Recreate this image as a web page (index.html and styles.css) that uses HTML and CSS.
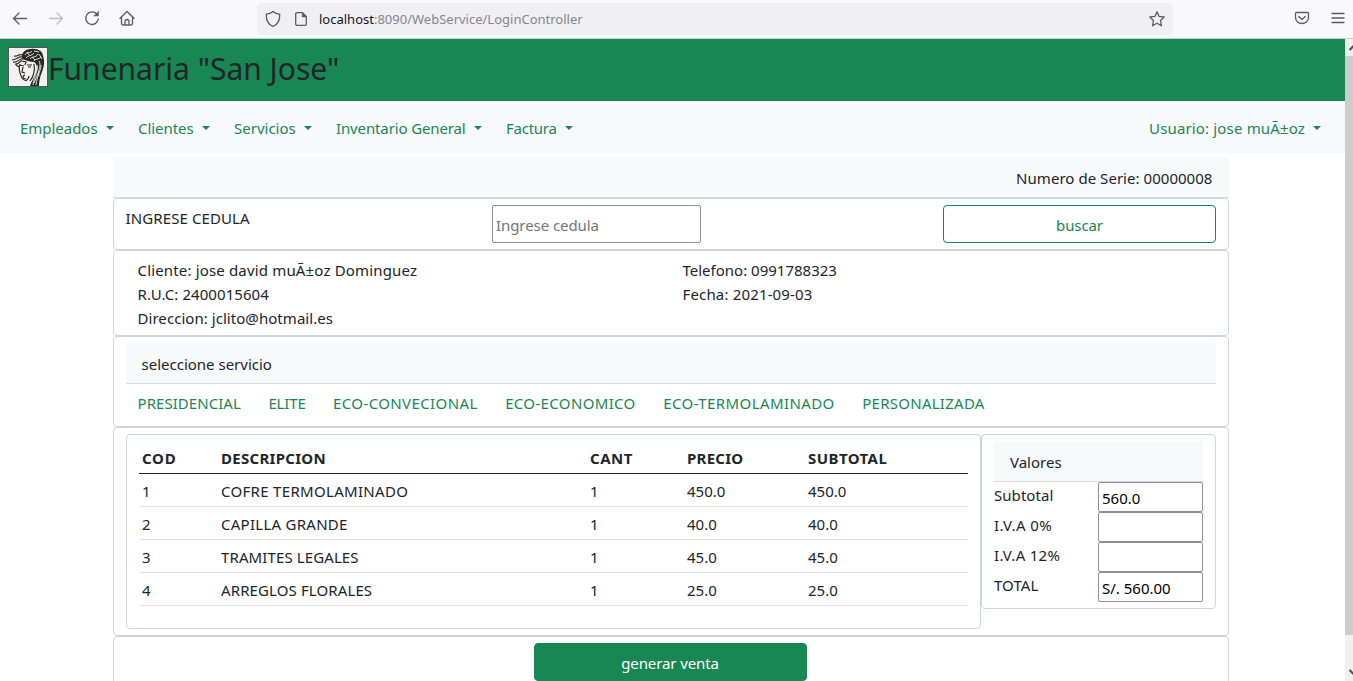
FILE: index.html
```
<!DOCTYPE html>
<html lang="es">
<head>
<meta charset="utf-8">
<title>Funenaria "San Jose"</title>
<link rel="stylesheet" href="styles.css">
</head>
<body>
<div class="toolbar">
  <svg class="tool back" width="16" height="16" viewBox="0 0 16 16"><path d="M14.500 8.500H1.500M7 3L1.500 8.500L7 14"/></svg>
  <svg class="tool forward" width="16" height="16" viewBox="0 0 16 16"><path d="M1.500 8.500H14.500M9 3L14.500 8.500L9 14"/></svg>
  <svg class="tool reload" width="16" height="16" viewBox="0 0 16 16"><path d="M12.800 4A6.300 6.300 0 1 0 14.300 9"/><path class="solid" d="M14.500 1.500V6H10Z"/></svg>
  <svg class="tool home" width="16" height="16" viewBox="0 0 16 16"><path d="M1 8.200L8 1.500L15 8.200M2.500 7V13.500Q2.500 15 4 15H12Q13.500 15 13.500 13.500V7M6 15V11.500Q6 9.500 8 9.500Q10 9.500 10 11.500V15"/></svg>
  <div class="urlbar">
    <svg class="tool" width="16" height="18" viewBox="0 0 16 18"><path d="M8 1.500C6 3.200 4 3.900 1.300 4.200C1 9.500 3.500 14.500 8 16.500C12.500 14.500 15 9.500 14.700 4.200C12 3.900 10 3.200 8 1.500Z"/></svg>
    <svg class="tool page" width="14" height="16" viewBox="0 0 14 16"><path d="M3 1.700H8.500L12.300 5.500V13Q12.300 14.300 11 14.300H3Q1.700 14.300 1.700 13V3Q1.700 1.700 3 1.700Z"/><path class="solid" d="M8.200 1.700V6H12.300Z"/></svg>
    <span class="url"><b>localhost</b>:8090/WebService/LoginController</span>
    <svg class="tool star" width="18" height="18" viewBox="0 0 18 18"><path d="M9 1.800L11.100 6.400L16.200 7L12.500 10.500L13.500 15.800L9 13.200L4.500 15.800L5.500 10.500L1.800 7L6.900 6.400Z"/></svg>
  </div>
  <svg class="tool pocket" width="16" height="16" viewBox="0 0 16 16"><path d="M2.500 2.500H13.500Q14.500 2.500 14.500 3.500V7.500A6.500 6 0 0 1 1.500 7.500V3.500Q1.500 2.500 2.500 2.500ZM4.800 6.500L8 9.500L11.200 6.500"/></svg>
  <svg class="tool menu" width="14" height="14" viewBox="0 0 14 14"><path d="M1 2.500H13M1 7H13M1 11.500H13"/></svg>
</div>

<div class="viewport">
  <div class="page-body">
    <header class="brand">
      <svg class="logo" width="40" height="40" viewBox="0 0 40 40">
        <rect x=".5" y=".5" width="39" height="39" fill="#f1f1f1" stroke="#555"/>
        <path fill="#2b2725" d="M14 8C15 4 19 2 23 2C29 1 35 4 35 9C37 14 36 20 34 25C32 30 31 34 31 39H22C23 35 26 31 28 26C30 21 29 17 26 15C22 15 18 13 14 12Z"/>
        <g fill="none" stroke="#2b2725" stroke-width="1.200">
          <path d="M14 8C11 6 10 10 6 9M14 10C11 9 8 13 4 13M15 12C11 11 10 16 5 15M14 14C12 13 11 18 7 17M12 17C10 22 12 27 14 31M12 20C9 19 8 19 8 17M14 14L18 15L17 18M12 18L16 19M14 31C17 35 20 34 21 29M17 28C14 29 15 32 18 32M26 17C27 23 26 29 22 34M19 18L24 18M20 20H23M15 20L14 25L17 26"/>
        </g>
        <g fill="none" stroke="#f1f1f1" stroke-width=".9">
          <path d="M17 8C19 4 22 7 24 4M18 11C20 8 24 9 26 6M22 12C24 9 28 11 30 7M26 14C28 11 31 13 33 10M31 14C34 19 29 24 31 29M29 18C31 22 26 29 25 38M33 18C33 24 29 28 28 38M26 4L31 5M19 5L21 8M24 10L27 13M31 7L34 12M31 24L26 36"/>
        </g>
      </svg>
      <span class="brand-name">Funenaria "San Jose"</span>
    </header>

    <nav class="menu-bar">
      <a class="menu-item empleados"><span>Empleados</span><i class="caret"></i></a>
      <a class="menu-item clientes"><span>Clientes</span><i class="caret"></i></a>
      <a class="menu-item servicios"><span>Servicios</span><i class="caret"></i></a>
      <a class="menu-item inventario"><span>Inventario General</span><i class="caret"></i></a>
      <a class="menu-item factura"><span>Factura</span><i class="caret"></i></a>
      <a class="menu-item usuario"><span>Usuario: jose muÃ±oz</span><i class="caret"></i></a>
    </nav>

    <main class="invoice">
      <div class="card-header serial">Numero de Serie: 00000008</div>

      <section class="panel search">
        <label class="search-label ls-11">INGRESE CEDULA</label>
        <input class="field search-input" placeholder="Ingrese cedula">
        <button class="btn btn-outline">buscar</button>
      </section>

      <section class="panel client">
        <div class="client-col">
          <div class="ls-16">Cliente: jose david muÃ±oz Dominguez</div>
          <div class="ls-07">R.U.C: 2400015604</div>
          <div class="ls-05">Direccion: jclito@hotmail.es</div>
        </div>
        <div class="client-col">
          <div>Telefono: 0991788323</div>
          <div class="ls-16">Fecha: 2021-09-03</div>
        </div>
      </section>

      <section class="panel">
        <div class="card-header">seleccione servicio</div>
        <div class="services">
          <a class="ls-05">PRESIDENCIAL</a>
          <a class="tight">ELITE</a>
          <a class="ls-38">ECO-CONVECIONAL</a>
          <a class="ls-35">ECO-ECONOMICO</a>
          <a class="ls-41">ECO-TERMOLAMINADO</a>
          <a class="ls-26">PERSONALIZADA</a>
        </div>
      </section>

      <section class="panel detail">
        <div class="panel items">
          <table class="table">
            <colgroup><col class="c-cod"><col class="c-desc"><col class="c-cant"><col class="c-precio"><col></colgroup>
            <thead><tr><th class="ls-77">COD</th><th class="ls-29">DESCRIPCION</th><th class="ls-53">CANT</th><th class="ls-26">PRECIO</th><th class="ls-44">SUBTOTAL</th></tr></thead>
            <tbody>
              <tr><td>1</td><td class="ls-31">COFRE TERMOLAMINADO</td><td>1</td><td>450.0</td><td>450.0</td></tr>
              <tr><td>2</td><td class="ls-26">CAPILLA GRANDE</td><td>1</td><td>40.0</td><td>40.0</td></tr>
              <tr><td>3</td><td class="ls-11">TRAMITES LEGALES</td><td>1</td><td>45.0</td><td>45.0</td></tr>
              <tr><td>4</td><td class="ls-11">ARREGLOS FLORALES</td><td>1</td><td>25.0</td><td>25.0</td></tr>
            </tbody>
          </table>
        </div>
        <div class="panel totals">
          <div class="card-header">Valores</div>
          <div class="total-row"><label class="ls-05">Subtotal</label><input class="field" value="560.0"></div>
          <div class="total-row"><label class="ls-38">I.V.A 0%</label><input class="field"></div>
          <div class="total-row"><label class="ls-29">I.V.A 12%</label><input class="field"></div>
          <div class="total-row"><label class="ls-05">TOTAL</label><input class="field" value="S/. 560.00"></div>
        </div>
      </section>

      <section class="panel submit">
        <button class="btn btn-solid">generar venta</button>
      </section>
    </main>
  </div>

  <div class="scrollbar">
    <svg class="arrow" width="8" height="17" viewBox="0 0 8 17"><path d="M4.500 11L8.500 7L12.500 11"/></svg>
    <div class="thumb"></div>
    <svg class="arrow down" width="8" height="17" viewBox="0 0 8 17"><path d="M4.500 6L8.500 10L12.500 6"/></svg>
  </div>
</div>
</body>
</html>
```
FILE: styles.css
```
* { box-sizing: border-box; }

html, body { height: 100%; }

body {
  margin: 0;
  overflow: hidden;
  display: flex;
  flex-direction: column;
  background: #fff;
  color: #212529;
  font: 15px/24px "Noto Sans", "Open Sans", sans-serif;
}

/* letter spacing steps, in hundredths of a pixel */
.tight { letter-spacing: -.15px; }
.ls-05 { letter-spacing: .05px; }
.ls-07 { letter-spacing: .07px; }
.ls-11 { letter-spacing: .11px; }
.ls-16 { letter-spacing: .16px; }
.ls-26 { letter-spacing: .26px; }
.ls-29 { letter-spacing: .29px; }
.ls-31 { letter-spacing: .31px; }
.ls-35 { letter-spacing: .35px; }
.ls-38 { letter-spacing: .38px; }
.ls-41 { letter-spacing: .41px; }
.ls-44 { letter-spacing: .44px; }
.ls-53 { letter-spacing: .53px; }
.ls-77 { letter-spacing: .77px; }

/* browser toolbar */
.toolbar {
  flex: none;
  display: flex;
  align-items: center;
  height: 39px;
  padding: 0 8px 2px 12px;
  background: #f9f9fb;
  border-bottom: 1px solid #ccc;
}
.tool { flex: none; fill: none; stroke: #5b5b66; stroke-width: 1.3; stroke-linecap: round; stroke-linejoin: round; }
.tool .solid { fill: #5b5b66; stroke-width: .5; }
.forward { margin-left: 20px; stroke: #bcbcc2; }
.reload { margin-left: 20px; }
.home { margin-left: 19px; }
.urlbar {
  display: flex;
  align-items: center;
  width: 916px;
  height: 32px;
  margin-left: 122px;
  margin-top: 1px;
  padding: 0 7px 0 8px;
  border-radius: 4px;
  background: #f0f0f4;
}
.page { margin-left: 13px; }
.url { margin-left: 11px; padding-top: 1px; font-size: 13px; color: #85858e; white-space: nowrap; }
.url b { font-weight: 400; color: #15141a; }
.star { margin-left: auto; }
.pocket { margin-left: 121px; }
.menu { margin-left: 21px; stroke-width: 1.3; }

/* page area */
.viewport { flex: 1; min-height: 0; display: flex; }
.page-body { flex: 1; min-width: 0; overflow: hidden; }

.brand {
  display: flex;
  align-items: flex-start;
  height: 62px;
  padding: 8px;
  background: #198754;
}
.brand-name { font-size: 30px; line-height: 44px; }

.menu-bar {
  display: flex;
  align-items: center;
  height: 52px;
  padding: 2px 24px 0 20px;
  background: #f8f9fb;
  color: #198754;
}
.menu-item { display: flex; align-items: center; white-space: nowrap; }
.menu-item .caret {
  margin: 0 0 1px auto;
  border-top: 4px solid #198754;
  border-left: 4px solid transparent;
  border-right: 4px solid transparent;
}
.empleados { width: 94px; letter-spacing: -.03px; }
.clientes { width: 72px; margin-left: 24px; letter-spacing: -.05px; }
.servicios { width: 78px; margin-left: 24px; }
.inventario { width: 146px; margin-left: 24px; letter-spacing: -.13px; }
.factura { width: 67px; margin-left: 24px; letter-spacing: -.25px; }
.usuario { width: 172px; margin-left: auto; letter-spacing: .16px; }

.invoice { width: 1116px; margin: 4px 0 0 113px; }

.card-header {
  height: 41px;
  padding: 9px 15.500px 7px;
  border-bottom: 1px solid #d6d9dd;
  border-radius: 3px 3px 0 0;
  background: #f8f9fb;
}
.serial { padding-right: 16.500px; text-align: right; letter-spacing: .04px; }

.panel {
  padding: 6px 12px;
  border: 1px solid #ced4da;
  border-radius: 4px;
}

.field {
  padding: 2px 3px 0;
  border: 1px solid #8f8f9d;
  border-radius: 2px;
  background: #fff;
  color: #000;
  font: inherit;
}
.field::placeholder { color: #757575; opacity: 1; }

.btn {
  height: 38px;
  padding: 2px 0 0;
  border: 1px solid #198754;
  border-radius: 4px;
  font: inherit;
  letter-spacing: -.1px;
}
.btn-outline { background: #fff; color: #198754; }
.btn-solid { background: #198754; color: #fff; }

.search { display: grid; grid-template-columns: 366px 1fr 273px; height: 52px; }
.search-label { padding-top: 1px; margin-left: -.5px; }
.search-input { width: 209px; height: 38px; letter-spacing: -.07px; }

.client { display: grid; grid-template-columns: 1fr 1fr; padding: 7px 12px 5px; }
.client-col { padding-left: 11.500px; }

.services { display: flex; gap: 27.500px; height: 36px; padding: 7px 11.500px 0; color: #198754; }

.detail { display: flex; align-items: flex-start; }
.items { width: 855px; height: 195px; }
.totals { width: 235px; }

.table { width: 829px; table-layout: fixed; border-collapse: separate; border-spacing: 0; }
.table th, .table td {
  height: 33px;
  padding: 5px 3px 3px;
  border-bottom: 1px solid #dee2e6;
  text-align: left;
}
.table th { border-bottom-color: #212529; }
.c-cod { width: 79px; }
.c-desc { width: 369px; }
.c-cant { width: 97px; }
.c-precio { width: 121px; }

.total-row { display: flex; justify-content: space-between; height: 30px; }
.total-row label { padding-top: 1px; }
.total-row .field { width: 105px; }
.totals .card-header { padding-left: 16px; }

.submit { display: flex; justify-content: center; height: 60px; padding-right: 14px; }
.btn-solid { width: 273px; }

/* right scrollbar, cut by the window edge */
.scrollbar { width: 8px; display: flex; flex-direction: column; overflow: hidden; background: #f0f0f0; }
.thumb { height: 579px; background: #cdcdcd; }
.arrow { flex: none; fill: none; stroke: #505050; stroke-width: 2; }
.down { margin-top: auto; }
```
